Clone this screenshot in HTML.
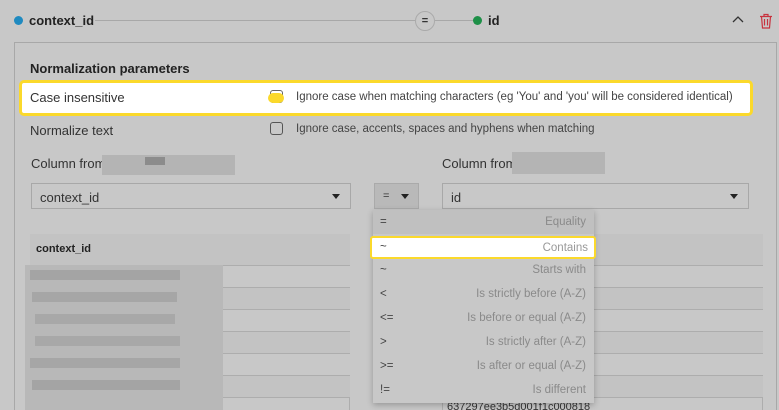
<!DOCTYPE html>
<html style="width:779px;height:410px;overflow:hidden"><head><style>
*{box-sizing:border-box;margin:0;padding:0}
body{width:779px;height:410px;overflow:hidden;background:#c8c8c8;font-family:"Liberation Sans",sans-serif;color:#333;position:relative}
.a{position:absolute;white-space:nowrap}
.b{font-weight:bold;color:#222}
.sel{position:absolute;height:26px;border:1px solid #a8a8a8;font-size:13px;padding:6px 8px;color:#333}
.tri{position:absolute;right:10px;top:10px;width:0;height:0;border-left:4px solid transparent;border-right:4px solid transparent;border-top:5px solid #222}
.row{position:absolute;height:22px;border-bottom:1px solid #adadad}
.dd div{position:absolute;left:0;width:221px;height:24px;font-size:11.5px;color:#8a8a8a}
.dd span{position:absolute;left:7px;top:6px;color:#444}
.dd i{position:absolute;right:8px;top:6px;font-style:normal}
.blur{position:absolute;background:#aaa}
</style></head><body>
<div class="a" style="left:14px;top:16px;width:9px;height:9px;border-radius:50%;background:#1f8ac0"></div>
<div class="a b" style="left:29px;top:13px;font-size:13px">context_id</div>
<div class="a" style="left:95px;top:20px;width:320px;height:1px;background:#a8a8a8"></div>
<div class="a" style="left:415px;top:11px;width:20px;height:20px;border-radius:50%;border:1px solid #aaa;font-size:11px;text-align:center;line-height:18px;font-weight:bold">=</div>
<div class="a" style="left:435px;top:20px;width:40px;height:1px;background:#a8a8a8"></div>
<div class="a" style="left:473px;top:16px;width:9px;height:9px;border-radius:50%;background:#1e9048"></div>
<div class="a b" style="left:488px;top:13px;font-size:13px">id</div>
<svg class="a" style="left:731px;top:14px" width="14" height="10"><path d="M2 8 L7 3 L12 8" fill="none" stroke="#333" stroke-width="1.3"/></svg>
<svg class="a" style="left:759px;top:13px" width="14" height="16"><path d="M1 3.5H13M5 3.5V1.5H9V3.5M2.5 3.5L3.5 15H10.5L11.5 3.5M5.5 6V12.5M8.5 6V12.5" fill="none" stroke="#c8323e" stroke-width="1.2"/></svg>
<div class="a" style="left:14px;top:42px;width:763px;height:380px;border:1px solid #a8a8a8"></div>
<div class="a b" style="left:30px;top:61px;font-size:13px">Normalization parameters</div>
<div class="a" style="left:19px;top:80px;width:734px;height:36px;background:#fff;border:3px solid #fbd92b;border-radius:5px"></div>
<div class="a" style="left:30px;top:90px;font-size:13px;color:#333">Case insensitive</div>
<div class="a" style="left:270px;top:90px;width:13px;height:13px;border:1px solid #666;border-radius:3px"></div>
<div class="a" style="left:268px;top:93px;width:16px;height:10px;border-radius:5px;background:#fbd92b"></div>
<div class="a" style="left:296px;top:91px;font-size:11.5px;color:#444">Ignore case when matching characters (eg 'You' and 'you' will be considered identical)</div>
<div class="a" style="left:30px;top:123px;font-size:13px">Normalize text</div>
<div class="a" style="left:270px;top:122px;width:13px;height:13px;border:1px solid #555;border-radius:3px"></div>
<div class="a" style="left:296px;top:123px;font-size:11.5px;color:#444">Ignore case, accents, spaces and hyphens when matching</div>
<div class="a" style="left:31px;top:156px;font-size:13px">Column from</div>
<div class="blur" style="left:102px;top:155px;width:133px;height:20px;background:#b4b4b4"></div>
<div class="blur" style="left:145px;top:157px;width:20px;height:8px;background:#8c8c8c"></div>
<div class="a" style="left:442px;top:156px;font-size:13px">Column from</div>
<div class="blur" style="left:512px;top:152px;width:93px;height:22px;background:#b4b4b4"></div>
<div class="sel" style="left:31px;top:183px;width:320px">context_id<div class="tri"></div></div>
<div class="a" style="left:374px;top:183px;width:45px;height:26px;background:#b9b9b9;border:1px solid #aaa;font-size:11px;padding:6px 0 0 8px">=<div class="tri" style="right:9px"></div></div>
<div class="sel" style="left:442px;top:183px;width:307px">id<div class="tri"></div></div>
<div class="a" style="left:30px;top:234px;width:320px;height:190px;border:1px solid #adadad;border-bottom:none"></div>
<div class="row" style="left:30px;top:234px;width:320px;height:32px;background:#c3c3c3"></div>
<div class="a b" style="left:36px;top:243px;font-size:11px">context_id</div>
<div class="row" style="left:30px;top:266px;width:320px;background:#c8c8c8"></div>
<div class="row" style="left:30px;top:288px;width:320px;background:#c3c3c3"></div>
<div class="row" style="left:30px;top:310px;width:320px;background:#c8c8c8"></div>
<div class="row" style="left:30px;top:332px;width:320px;background:#c3c3c3"></div>
<div class="row" style="left:30px;top:354px;width:320px;background:#c8c8c8"></div>
<div class="row" style="left:30px;top:376px;width:320px;background:#c3c3c3"></div>
<div class="blur" style="left:25px;top:265px;width:198px;height:145px;background:#b8b8b8"></div>
<div class="blur" style="left:30px;top:270px;width:150px;height:10px;background:#a4a4a4"></div>
<div class="blur" style="left:32px;top:292px;width:145px;height:10px;background:#a6a6a6"></div>
<div class="blur" style="left:35px;top:314px;width:140px;height:10px;background:#a8a8a8"></div>
<div class="blur" style="left:35px;top:336px;width:145px;height:10px;background:#a8a8a8"></div>
<div class="blur" style="left:30px;top:358px;width:150px;height:10px;background:#a6a6a6"></div>
<div class="blur" style="left:32px;top:380px;width:148px;height:10px;background:#a4a4a4"></div>
<div class="a" style="left:442px;top:234px;width:321px;height:190px;border:1px solid #adadad;border-bottom:none"></div>
<div class="row" style="left:442px;top:234px;width:321px;height:32px;background:#c3c3c3"></div>
<div class="row" style="left:442px;top:266px;width:321px;background:#c8c8c8"></div>
<div class="row" style="left:442px;top:288px;width:321px;background:#c3c3c3"></div>
<div class="row" style="left:442px;top:310px;width:321px;background:#c8c8c8"></div>
<div class="row" style="left:442px;top:332px;width:321px;background:#c3c3c3"></div>
<div class="row" style="left:442px;top:354px;width:321px;background:#c8c8c8"></div>
<div class="row" style="left:442px;top:376px;width:321px;background:#c3c3c3"></div>
<div class="a" style="left:447px;top:401px;font-size:11px;color:#333">637297ee3b5d001f1c000818</div>
<div class="a dd" style="left:373px;top:210px;width:221px;height:193px;background:#c8c8c8;box-shadow:0 2px 6px rgba(0,0,0,.25)">
<div style="top:0;background:#c0c0c0"><span>=</span><i>Equality</i></div>
<div style="top:48px"><span>~</span><i>Starts with</i></div>
<div style="top:72px"><span>&lt;</span><i>Is strictly before (A-Z)</i></div>
<div style="top:96px"><span>&lt;=</span><i>Is before or equal (A-Z)</i></div>
<div style="top:120px"><span>&gt;</span><i>Is strictly after (A-Z)</i></div>
<div style="top:144px"><span>&gt;=</span><i>Is after or equal (A-Z)</i></div>
<div style="top:168px"><span>!=</span><i>Is different</i></div>
</div>
<div class="a" style="left:370px;top:236px;width:226px;height:23px;background:#fff;border:2px solid #fbd92b;border-radius:3px;font-size:11.5px;color:#999">
<span style="position:absolute;left:8px;top:3px;color:#444">~</span><span style="position:absolute;right:6px;top:4px">Contains</span></div>
</body></html>
